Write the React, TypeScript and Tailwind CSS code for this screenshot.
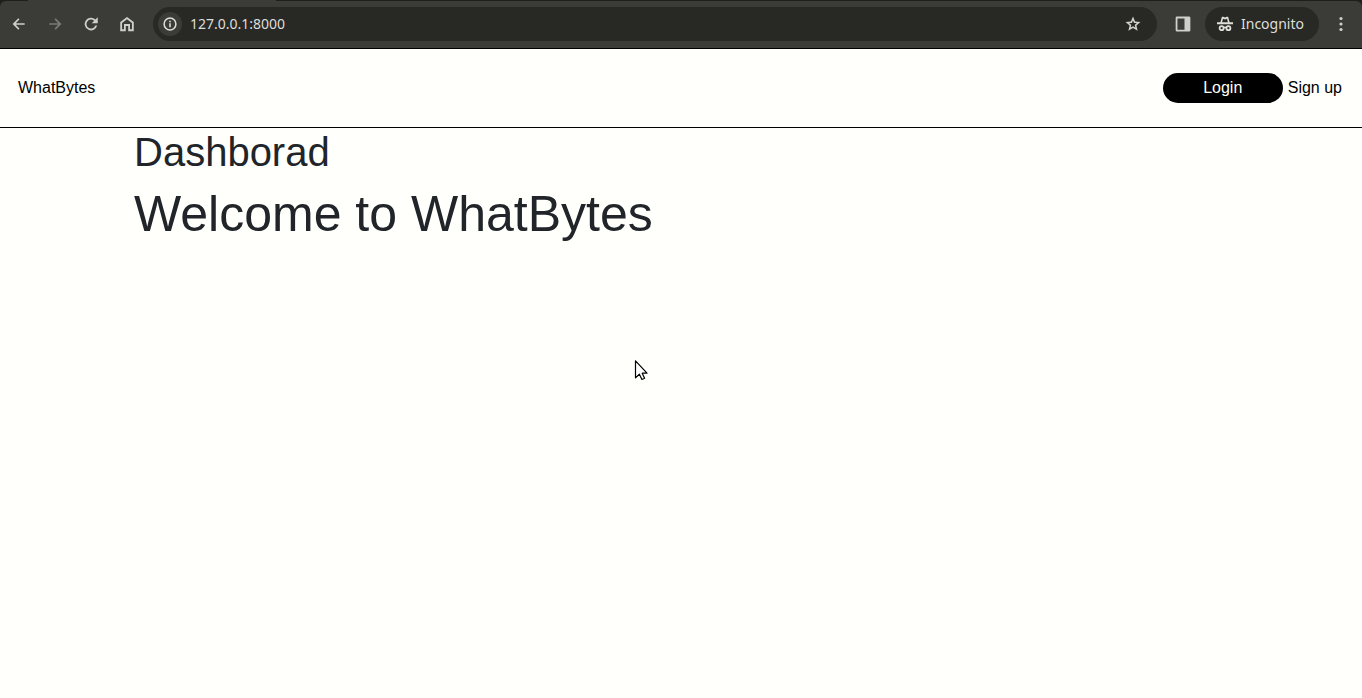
import React from "react";

type IconProps = { d: string; size?: number; className?: string };

function Icon({ d, size = 18, className = "" }: IconProps) {
  return (
    <svg aria-hidden="true" width={size} height={size} viewBox="0 0 24 24" fill="currentColor" className={className}>
      <path fillRule="evenodd" d={d} />
    </svg>
  );
}

const paths = {
  back: "M20.500 10.700H7.100l5.600-5.600L11 3.400 2.400 12l8.600 8.600 1.700-1.700-5.600-5.600H20.500z",
  forward: "M3.500 10.700h13.400l-5.600-5.600L13 3.400l8.600 8.600-8.600 8.600-1.700-1.700 5.600-5.600H3.500z",
  reload: "M17.900 6.100A8.400 8.400 0 1 0 20.200 14H17.700A6 6 0 1 1 16.200 7.800L13 11h8V3z",
  home: "M3 9.300 12 2.500l9 6.800V21.500H13.600V14.500h-3.200v7H3zM5.400 10.500V19.100H8V12.100h8v7h2.600v-8.600L12 5.500z",
  info: "M12 2a10 10 0 1 0 0 20 10 10 0 0 0 0-20zm0 2.300a7.700 7.700 0 1 1 0 15.400 7.700 7.700 0 0 1 0-15.400zM10.800 7h2.400v2.400h-2.400zm0 4h2.400v6h-2.400z",
  star: "M22 9.240l-7.190-.62L12 2 9.190 8.630 2 9.240l5.460 4.730L5.820 21 12 17.270 18.180 21l-1.630-7.030L22 9.240zM12 14.900l-3.100 1.900.8-3.600-2.700-2.400 3.600-.3L12 7.200l1.400 3.300 3.600.3-2.700 2.400.8 3.600L12 14.900z",
  panel: "M4 2h16a1.800 1.800 0 0 1 1.800 1.800v16.400a1.800 1.800 0 0 1-1.800 1.800H4a1.800 1.800 0 0 1-1.800-1.800V3.800A1.800 1.800 0 0 1 4 2zM4.600 4.500v15H14V4.500z",
};

function ToolButton({ label, d, dim, size = 16 }: { label: string; d: string; dim?: boolean; size?: number }) {
  return (
    <button
      type="button"
      aria-label={label}
      disabled={dim}
      className={`flex size-9 items-center justify-center ${dim ? "text-[#7b7b77]" : "text-[#d0d0cb]"}`}
    >
      <Icon d={d} size={size} />
    </button>
  );
}

function BrowserBar() {
  return (
    <div className="h-[49px] border-b border-black bg-[#1e1e1b]">
      <div className="h-px w-full px-7">
        <div className="h-px w-[248px] bg-[#3b3b37]" />
      </div>
      <div className="flex h-[47px] items-center rounded-t-md bg-[#3b3b37] pr-[3px] pb-0.5 pl-px font-['Noto_Sans',sans-serif] text-sm text-[#deded9]">
        <ToolButton label="Back" d={paths.back} />
        <ToolButton label="Forward" d={paths.forward} dim />
        <ToolButton label="Reload" d={paths.reload} size={18} />
        <ToolButton label="Home" d={paths.home} size={18} />
        <div className="ml-2 flex h-[34px] min-w-0 flex-1 items-center rounded-full bg-[#282824] pr-[15px] pl-[5px]">
          <button type="button" aria-label="Site information" className="flex size-6 items-center justify-center rounded-full bg-[#3b3b37]">
            <Icon d={paths.info} size={16} />
          </button>
          <input
            aria-label="Address"
            defaultValue="127.0.0.1:8000"
            className="ml-2 min-w-0 flex-1 bg-transparent outline-none"
          />
          <button type="button" aria-label="Bookmark this page" className="text-[#d0d0cb]">
            <Icon d={paths.star} size={18} className="block" />
          </button>
        </div>
        <div className="ml-2 flex">
          <ToolButton label="Side panel" d={paths.panel} size={18} />
        </div>
        <button type="button" className="ml-1 flex h-[34px] w-[114px] items-center gap-2 rounded-full bg-[#282824] px-3">
          <svg aria-hidden="true" width="16" height="16" viewBox="0 0 16 16">
            <path fill="currentColor" d="M4.900.700h1.300l1.800.700 1.800-.700h1.300L12.600 6.300H16v1.900H0V6.300h3.400z" />
            <path fill="#282824" d="M6 2.700 5.100 6.300h5.800l-.9-3.600-2 .7z" />
            <g fill="none" stroke="currentColor" strokeWidth="1.800">
              <circle cx="4.600" cy="12.200" r="2" />
              <circle cx="11.400" cy="12.200" r="2" />
              <path d="M6.500 11.800q1.500-.8 3 0" />
            </g>
          </svg>
          Incognito
        </button>
        <button type="button" aria-label="Menu" className="ml-1 flex size-9 items-center justify-center text-[#d0d0cb]">
          <svg aria-hidden="true" width="4" height="16" viewBox="0 0 4 16" fill="currentColor">
            <circle cx="2" cy="2.500" r="1.600" />
            <circle cx="2" cy="8" r="1.600" />
            <circle cx="2" cy="13.500" r="1.600" />
          </svg>
        </button>
      </div>
    </div>
  );
}

export default function App() {
  return (
    <div className="relative min-h-screen bg-[#fffffc] font-['Liberation_Sans',Arial,sans-serif] text-base text-black">
      <BrowserBar />
      <header className="flex h-[79px] items-center justify-between border-b border-black pr-5 pl-[18px]">
        <a href="#home">WhatBytes</a>
        <nav className="flex items-center gap-[5px]">
          <a href="#login" className="flex h-[30px] w-[120px] items-center justify-center rounded-full bg-black text-[#fffffc]">
            Login
          </a>
          <a href="#signup">Sign up</a>
        </nav>
      </header>
      <main className="px-[134px] text-[#212529]">
        <h1 className="text-[40px] leading-12">Dashborad</h1>
        <h2 className="mt-2 text-[50px] leading-15">Welcome to WhatBytes</h2>
      </main>
      <svg aria-hidden="true" width="16" height="24" viewBox="0 0 16 24" className="pointer-events-none absolute top-[359px] left-[634px]">
        <path d="M1.500 1.800v17l3.900-3.600 2.500 5.300 2.700-1.200-2.400-5.100h4.800z" fill="white" stroke="black" strokeWidth="1.200" strokeLinejoin="round" />
      </svg>
    </div>
  );
}
